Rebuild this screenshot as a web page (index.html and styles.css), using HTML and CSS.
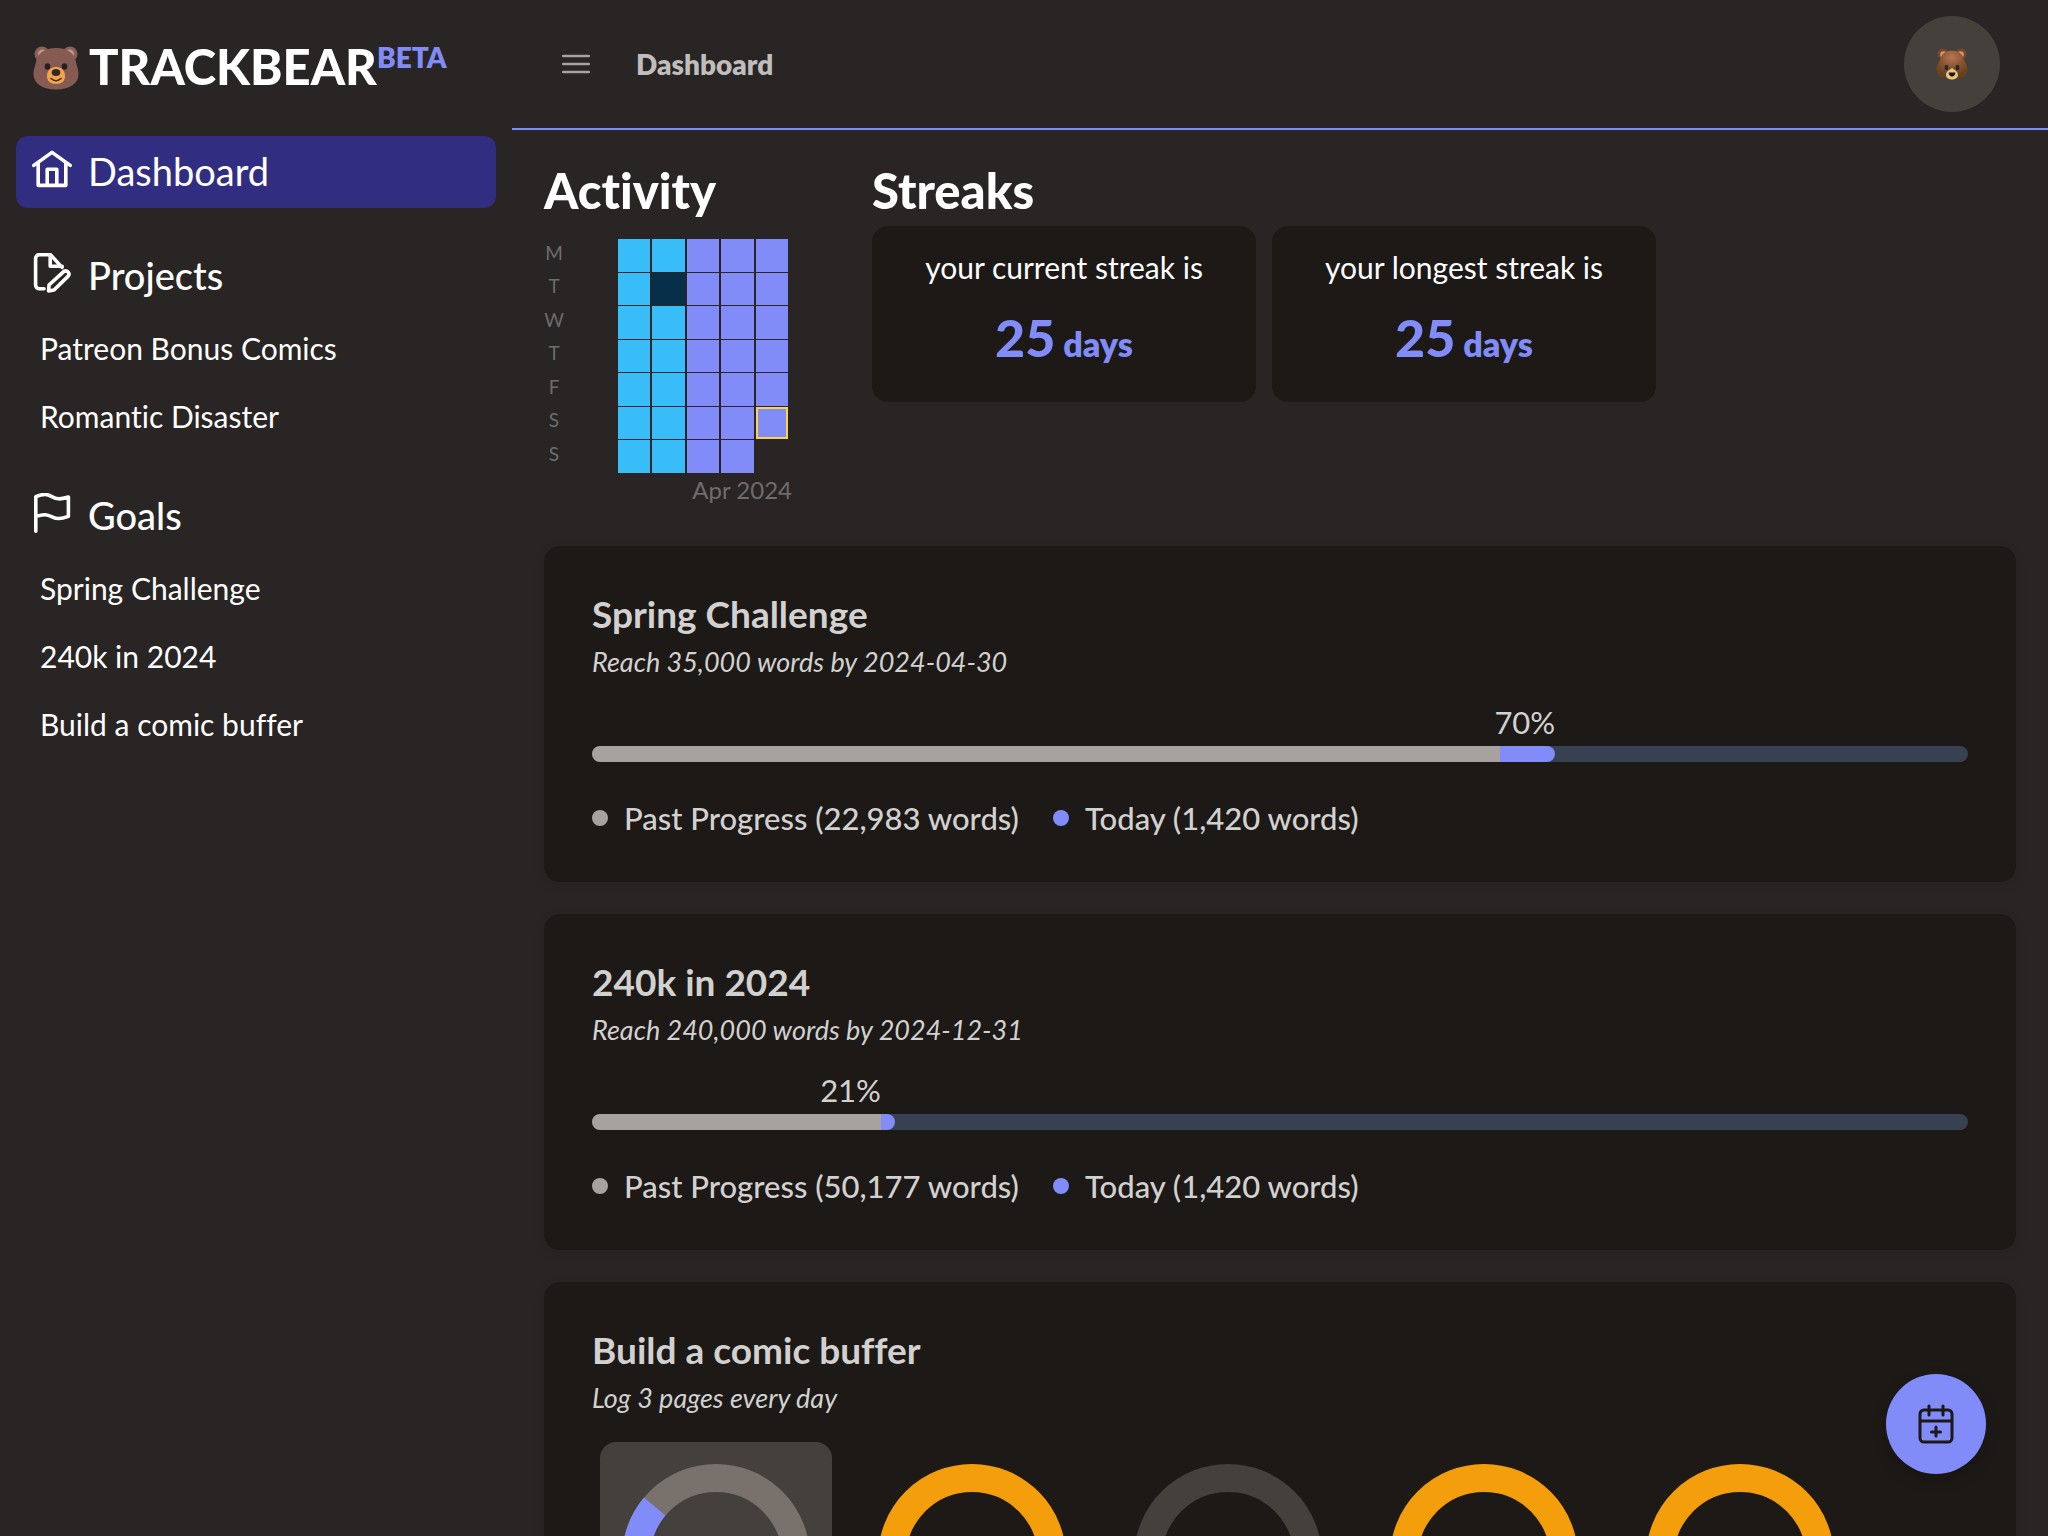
FILE: index.html
```html
<!DOCTYPE html>
<html lang="en">
<head>
<meta charset="utf-8">
<title>Dashboard - TrackBear</title>
<link rel="stylesheet" href="styles.css">
</head>
<body>
<div class="app">
  <aside class="sidebar">
    <a class="logo" href="#">
      <svg class="logo-bear" viewBox="0 0 46 44" aria-hidden="true">
        <circle cx="9" cy="8" r="7.500" fill="#8d6057"/><circle cx="37" cy="8" r="7.500" fill="#8d6057"/>
        <circle cx="9.500" cy="8" r="4.500" fill="#bc9b83"/><circle cx="36.500" cy="8" r="4.500" fill="#bc9b83"/>
        <path d="M23 2C11 2 4 8 3 16C2 21 .5 23 .5 28C.5 38 10 43.500 23 43.500S45.500 38 45.500 28C45.500 23 44 21 43 16C42 8 35 2 23 2Z" fill="#865b53"/>
        <ellipse cx="14.500" cy="20.500" rx="2.800" ry="3.300" fill="#222"/><ellipse cx="31.500" cy="20.500" rx="2.800" ry="3.300" fill="#222"/>
        <path d="M23 21c-6 0-9 4-9 9s3 8 9 8 9-3 9-8-3-9-9-9z" fill="#f7a24a"/>
        <ellipse cx="23" cy="26.500" rx="4.300" ry="3.600" fill="#2b2b2f"/>
        <path d="M18 32.500q5 4.500 10 0" fill="none" stroke="#2b2b2f" stroke-width="1.600" stroke-linecap="round"/>
      </svg>
      <span class="logo-name">TRACKBEAR</span><span class="logo-beta">BETA</span>
    </a>
    <nav class="menu">
      <a class="menu-head active" href="#">
        <svg class="menu-icon" viewBox="0 0 20 20" aria-hidden="true"><path d="M.900 8.200 10 1.700l9.100 6.500M3.100 7v11.200h13.800V7M7.600 18V10.100h4.800v8"/></svg>
        Dashboard
      </a>
      <a class="menu-head" href="#">
        <svg class="menu-icon" viewBox="0 0 20 20" aria-hidden="true"><path d="M6 17.900H3.700A1.900 1.900 0 0 1 1.800 16V2.700A1.900 1.900 0 0 1 3.700.800H9.200l5.800 6.400M9.100.900v5.700h6M8.300 19l.2-3 7.200-6.600c1.700-1.300 3.700.700 2.300 2.300L11 18.500z"/></svg>
        Projects
      </a>
      <a class="menu-item" href="#">Patreon Bonus Comics</a>
      <a class="menu-item" href="#">Romantic Disaster</a>
      <a class="menu-head" href="#">
        <svg class="menu-icon" viewBox="0 0 20 20" aria-hidden="true"><path d="M1.900 19.100V1.800c4-1.500 5.600-1.400 8 0s4 1.500 8.300.200v9.700c-4 1.400-5.800 1.400-8.200.200s-4-1.500-8.100-.200"/></svg>
        Goals
      </a>
      <a class="menu-item" href="#">Spring Challenge</a>
      <a class="menu-item" href="#">240k in 2024</a>
      <a class="menu-item" href="#">Build a comic buffer</a>
    </nav>
  </aside>

  <div class="page">
    <header class="topbar">
      <button class="menu-toggle" type="button" aria-label="Toggle menu">
        <svg viewBox="0 0 28 20" aria-hidden="true"><path d="M1 2h26M1 10h26M1 18h26"/></svg>
      </button>
      <h1 class="crumb">Dashboard</h1>
      <button class="avatar" type="button" aria-label="Account">
        <svg viewBox="0 0 32 32" aria-hidden="true">
          <defs><radialGradient id="fur" cx="50%" cy="25%" r="70%"><stop offset="0" stop-color="#b5775a"/><stop offset=".500" stop-color="#8c5630"/><stop offset="1" stop-color="#6a3f1e"/></radialGradient></defs>
          <circle cx="7" cy="6" r="5.500" fill="#75482a"/><circle cx="25" cy="6" r="5.500" fill="#75482a"/>
          <circle cx="7.500" cy="6.500" r="3.300" fill="#cf947c"/><circle cx="24.500" cy="6.500" r="3.300" fill="#cf947c"/>
          <path d="M16 2.500c-7 0-11 4-12 10C2 15 .500 18 .500 22c0 5 4 7.500 9 7.500h13c5 0 9-2.500 9-7.500 0-4-1.500-7-3.500-9.500-1-6-5-10-12-10z" fill="url(#fur)"/>
          <path d="M16 20c-2 2-6 3-6 7 0 3 3 4.500 6 4.500s6-1.500 6-4.500c0-4-4-5-6-7z" fill="#e9c47e"/>
          <ellipse cx="10.500" cy="19.500" rx="1.900" ry="2.800" fill="#262a30"/><ellipse cx="21.500" cy="19.500" rx="1.900" ry="2.800" fill="#262a30"/>
          <path d="M12.800 24.500h6.400c.500 2-1.500 4-3.200 4s-3.700-2-3.200-4z" fill="#1c1612"/>
        </svg>
      </button>
    </header>

    <main class="content">
      <div class="overview">
        <section class="activity">
          <h2 class="heading">Activity</h2>
          <div class="heatmap">
            <div class="days"><span>M</span><span>T</span><span>W</span><span>T</span><span>F</span><span>S</span><span>S</span></div>
            <div class="weeks">
              <i class="low"></i><i class="low"></i><i class="low"></i><i class="low"></i><i class="low"></i><i class="low"></i><i class="low"></i>
              <i class="low"></i><i class="none"></i><i class="low"></i><i class="low"></i><i class="low"></i><i class="low"></i><i class="low"></i>
              <i></i><i></i><i></i><i></i><i></i><i></i><i></i>
              <i></i><i></i><i></i><i></i><i></i><i></i><i></i>
              <i></i><i></i><i></i><i></i><i></i><i class="today"></i>
            </div>
          </div>
          <p class="month">Apr 2024</p>
        </section>
        <section class="streaks">
          <h2 class="heading">Streaks</h2>
          <div class="streak-row">
            <div class="streak"><p>your current streak is</p><p class="count"><b>25</b> days</p></div>
            <div class="streak"><p>your longest streak is</p><p class="count"><b>25</b> days</p></div>
          </div>
        </section>
      </div>

      <section class="card">
        <h3 class="card-title">Spring Challenge</h3>
        <p class="card-sub">Reach 35,000 words by 2024-04-30</p>
        <div class="meter">
          <div class="meter-label" style="width:70%">70%</div>
          <div class="track"><div class="past" style="width:66%"></div><div class="now" style="width:4%"></div></div>
        </div>
        <ul class="legend"><li><i class="dot"></i>Past Progress (22,983 words)</li><li><i class="dot blue"></i>Today (1,420 words)</li></ul>
      </section>

      <section class="card">
        <h3 class="card-title">240k in 2024</h3>
        <p class="card-sub">Reach 240,000 words by 2024-12-31</p>
        <div class="meter">
          <div class="meter-label" style="width:21%">21%</div>
          <div class="track"><div class="past" style="width:21%"></div><div class="now" style="width:1%"></div></div>
        </div>
        <ul class="legend"><li><i class="dot"></i>Past Progress (50,177 words)</li><li><i class="dot blue"></i>Today (1,420 words)</li></ul>
      </section>

      <section class="card">
        <h3 class="card-title">Build a comic buffer</h3>
        <p class="card-sub">Log 3 pages every day</p>
        <div class="rings">
          <div class="ring current"><svg viewBox="0 0 188 188"><circle class="rest" cx="94" cy="94" r="80"/><circle class="part" cx="94" cy="94" r="80" pathLength="360" stroke-dasharray="120 240" transform="rotate(100 94 94)"/></svg></div>
          <div class="ring"><svg viewBox="0 0 188 188"><circle class="done" cx="94" cy="94" r="80"/></svg></div>
          <div class="ring"><svg viewBox="0 0 188 188"><circle class="missed" cx="94" cy="94" r="80"/></svg></div>
          <div class="ring"><svg viewBox="0 0 188 188"><circle class="done" cx="94" cy="94" r="80"/></svg></div>
          <div class="ring"><svg viewBox="0 0 188 188"><circle class="done" cx="94" cy="94" r="80"/></svg></div>
        </div>
      </section>
    </main>
  </div>
</div>
<button class="fab" type="button" aria-label="Log progress">
  <svg viewBox="0 0 36 40" aria-hidden="true"><path d="M6 6h24a4 4 0 0 1 4 4v24a4 4 0 0 1-4 4H6a4 4 0 0 1-4-4V10a4 4 0 0 1 4-4zM2 17h32M11 2v9M25 2v9M18 23v9M13.500 28h9"/></svg>
</button>
</body>
</html>
```
FILE: styles.css
```css
* { box-sizing: border-box; margin: 0; padding: 0; }
body {
  background: #292524;
  color: #fff;
  font-family: Lato, "Liberation Sans", sans-serif;
  font-size: 31px;
  font-variant-ligatures: no-common-ligatures;
}
a { color: inherit; text-decoration: none; }
button { border: 0; background: none; font: inherit; color: inherit; cursor: pointer; }
svg { display: block; }

.app { display: flex; height: 100vh; overflow: hidden; }

/* Sidebar */
.sidebar { flex: 0 0 25%; padding: 0 16px; }
.logo { display: flex; align-items: flex-start; height: 136px; padding: 40px 16px 0; line-height: 52px; }
.logo-bear { width: 46px; height: 44px; margin: 6px 10px 0 1px; }
.logo-name { font-size: 49px; font-weight: 900; }
.logo-beta { font-size: 28px; font-weight: 800; line-height: 34px; color: #818cf8; }
.menu { display: flex; flex-direction: column; }
.menu-head { display: flex; gap: 16px; height: 72px; margin-bottom: 32px; padding: 0 16px; border-radius: 12px; font-size: 38px; line-height: 70px; }
.menu-head:not(.active) { margin-bottom: 2px; font-weight: 500; }
.menu-head.active { background: #312e81; }
.menu-item + .menu-head { margin-top: 30px; }
.menu-icon { width: 40px; height: 40px; margin-top: 13px; fill: none; stroke: currentColor; stroke-width: 1.800; stroke-linecap: round; stroke-linejoin: round; }
.menu-item { padding: 0 24px; font-size: 30px; line-height: 68px; }

/* Top bar */
.page { flex: 1; min-width: 0; display: flex; flex-direction: column; }
.topbar { display: flex; align-items: center; height: 130px; padding: 0 48px; border-bottom: 2px solid #818cf8; flex: none; }
.menu-toggle { width: 32px; height: 32px; display: grid; place-items: center; }
.menu-toggle svg { width: 28px; height: 20px; fill: none; stroke: #a8a29e; stroke-width: 2.500; stroke-linecap: round; }
.crumb { margin-left: 44px; font-size: 28px; font-weight: 800; color: #bfbebd; }
.avatar { display: grid; place-items: center; width: 96px; height: 96px; margin-left: auto; border-radius: 50%; background: #44403c; }
.avatar svg { width: 32px; height: 32px; }

/* Content */
.content { flex: 1; min-height: 0; padding: 32px; overflow-y: auto; scrollbar-width: none; }
.overview { display: flex; gap: 80px; height: 384px; }
.heading { padding-bottom: 8px; font-size: 49px; font-weight: 900; line-height: 56px; }
.activity { width: 248px; }
.heatmap { display: flex; justify-content: space-between; height: 234px; margin: 13px 4px 0 0; }
.days { display: grid; grid-template-rows: repeat(7, 1fr); width: 20px; text-align: center; font-size: 19px; line-height: 28px; color: #6f6c6b; }
.weeks { display: grid; grid-auto-flow: column; grid-template: repeat(7, 1fr) / repeat(5, 1fr); gap: 1px 2px; width: 170px; }
.weeks i { background: #818cf8; }
.weeks .low { background: #38bdf8; }
.weeks .none { background: #082f49; }
.weeks .today { border: 2px solid #fcd34d; }
.month { text-align: right; font-size: 24px; line-height: 34px; color: #6f6c6b; }
.streak-row { display: flex; gap: 16px; }
.streak { width: 384px; height: 176px; padding: 16px; border-radius: 16px; background: #1c1917; text-align: center; font-size: 30px; line-height: 50px; }
.count { margin-top: 14px; font-size: 34px; line-height: 62px; font-weight: 800; color: #818cf8; }
.count b { font-size: 52px; font-weight: 900; }

.card { margin-bottom: 32px; padding: 40px 48px; border-radius: 16px; background: #1c1917; color: #d2d1d0; box-shadow: 0 4px 12px rgba(0, 0, 0, .1); }
.card-title { font-size: 37px; font-weight: 700; line-height: 56px; }
.card-sub { font-size: 27px; font-style: italic; line-height: 40px; }
.meter { margin-top: 16px; }
.meter-label { text-align: right; line-height: 48px; }
.track { display: flex; height: 16px; border-radius: 8px; background: #374151; overflow: hidden; }
.past { background: #a8a29e; }
.now { background: #818cf8; border-radius: 0 8px 8px 0; }
.legend { display: flex; gap: 34px; margin-top: 32px; list-style: none; font-weight: 500; line-height: 48px; }
.legend li { display: flex; align-items: center; gap: 16px; }
.dot { width: 16px; height: 16px; border-radius: 50%; background: #a8a29e; }
.dot.blue { background: #818cf8; }
.rings { display: flex; gap: 24px; margin: 24px 8px 0; }
.ring { width: 232px; padding: 22px; border-radius: 16px; }
.ring.current { background: #44403c; }
.ring circle { fill: none; stroke-width: 28; }
.ring .done { stroke: #f59e0b; }
.ring .missed { stroke: #44403c; }
.ring .rest { stroke: #78716c; }
.ring .part { stroke: #818cf8; }

/* Floating action button */
.fab { position: fixed; right: 62px; bottom: 62px; display: grid; place-items: center; width: 100px; height: 100px; border-radius: 50%; background: #818cf8; box-shadow: 0 6px 16px rgba(0, 0, 0, .15); }
.fab svg { width: 36px; height: 40px; fill: none; stroke: #1c1917; stroke-width: 3; stroke-linecap: round; }
```
